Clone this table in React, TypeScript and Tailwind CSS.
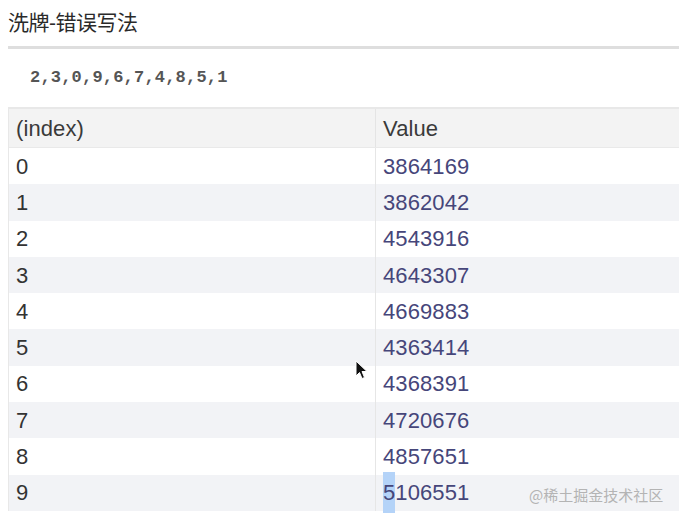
import React from "react";

const rows = [3864169, 3862042, 4543916, 4643307, 4669883, 4363414, 4368391, 4720676, 4857651, 5106551];

function Cursor() {
  return (
    <svg className="absolute left-[355px] top-[360px]" width="14" height="20" viewBox="0 0 14 20">
      <path d="M1 1 L1 16 L4.5 12.5 L7 18.5 L9.5 17.5 L7 11.5 L12 11.5 Z" fill="#111" stroke="#fff" strokeWidth="1" />
    </svg>
  );
}

export default function App() {
  return (
    <div className="relative w-[679px] h-[520px] overflow-hidden bg-white" style={{ fontFamily: '"Liberation Sans", "Noto Sans CJK SC", sans-serif' }}>
      {/* title */}
      <div className="h-[46px] flex items-center pl-2 text-[21px] text-[#2a2a2a] tracking-[-0.5px]">
        洗牌-错误写法
      </div>
      <div className="ml-2 h-[3px] bg-[#dedede]" />

      {/* console output */}
      <div className="h-[58px] flex items-center pl-[30px]">
        <span className="text-[17px] font-bold text-[#555] tracking-[0.2px]" style={{ fontFamily: '"Liberation Mono", monospace' }}>
          2,3,0,9,6,7,4,8,5,1
        </span>
      </div>

      {/* table */}
      <div className="ml-2 border-t-2 border-l border-[#e8e8e8] text-[22px] tracking-[0.1px]">
        <div className="flex h-[39px] bg-[#f3f3f3] border-b border-[#e9e9e9]">
          <div className="w-[367px] flex items-center pl-[7px] text-[#3a3a3a] border-r border-[#e4e4e4]">(index)</div>
          <div className="flex-1 flex items-center pl-[7px] text-[#3a3a3a]">Value</div>
        </div>
        {rows.map((v, i) => (
          <div key={i} className={`flex h-[36.3px] ${i % 2 === 1 ? "bg-[#f2f3f6]" : "bg-white"}`}>
            <div className="w-[367px] flex items-center pl-[7px] text-[#333] border-r border-[#e6e6e6]">{i}</div>
            <div className="flex-1 flex items-center pl-[7px] text-[#46467a]">
              {i === 9 ? (
                <>
                  <span className="bg-[#b4d3f8] py-[4px]">5</span>106551
                </>
              ) : (
                v
              )}
            </div>
          </div>
        ))}
      </div>

      <div className="absolute left-[529px] top-[484px] text-[15px] text-[#b4b4b4]" style={{ fontFamily: '"Noto Sans CJK SC", sans-serif' }}>
        @稀土掘金技术社区
      </div>
      <Cursor />
    </div>
  );
}
